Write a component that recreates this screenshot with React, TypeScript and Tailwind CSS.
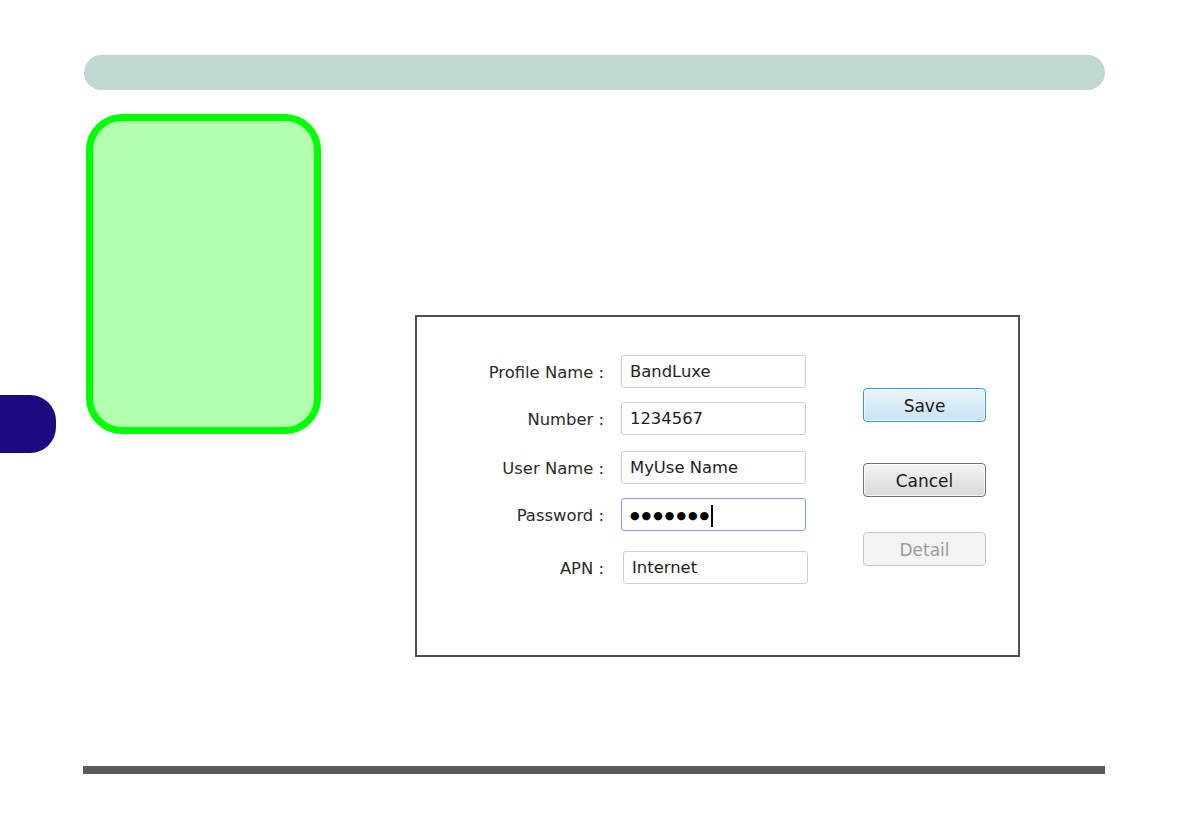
import React from "react";

const font = { fontFamily: '"DejaVu Sans", Verdana, sans-serif' };

function Row({ label, value, mt, shift, focused, password }: { label: string; value?: string; mt: string; shift?: boolean; focused?: boolean; password?: boolean }) {
  return (
    <div className={`flex items-center ${mt}`}>
      <div className="w-[188px] pr-[1px] pt-[4px] text-right text-[16.4px] text-[#2a2a2a] leading-none">{label}</div>
      <div
        className={`${shift ? "ml-[18px]" : "ml-[16px]"} w-[185px] h-[33px] rounded-[3px] bg-white flex items-center pl-[8px] border ${
          focused ? "border-[#7fa9d3]" : "border-[#cfcfcf]"
        }`}
      >
        {password ? (
          <div className="flex items-center pt-[2px]">
            <span className="text-[11px] tracking-[2px] text-black leading-none">●●●●●●●</span>
            <span className="w-[2px] h-[22px] bg-black" />
          </div>
        ) : (
          <span className="text-[16.4px] text-[#1e1e1e] leading-none pt-[2px]">{value}</span>
        )}
      </div>
    </div>
  );
}

export default function App() {
  return (
    <div className="w-[1190px] h-[838px] bg-white overflow-hidden" style={font}>
      <div className="pt-[55px] pl-[84px]">
        <div className="w-[1021px] h-[35px] rounded-full bg-[#c0d7d3]" />
      </div>

      <div className="flex items-start mt-[24px]">
        <div className="w-[56px] h-[58px] mt-[281px] rounded-r-[26px] bg-[#1a0c80]" />
        <div className="ml-[30px] w-[235px] h-[320px] rounded-[36px] border-[7px] border-[#00ff00] bg-[#b3ffb0]" />

        <div className="ml-[94px] mt-[201px] w-[605px] h-[342px] border-2 border-[#4f4f4f] bg-white flex">
          <div className="flex flex-col pt-[38px]">
            <Row label="Profile Name :" value="BandLuxe" mt="mt-0" />
            <Row label="Number :" value="1234567" mt="mt-[14px]" />
            <Row label="User Name :" value="MyUse Name" mt="mt-[16px]" />
            <Row label="Password :" mt="mt-[14px]" focused password />
            <Row label="APN :" value="Internet" mt="mt-[20px]" shift />
          </div>
          <div className="flex flex-col ml-[55px] pt-[71px]">
            <button className="w-[123px] h-[34px] rounded-[4px] border border-[#3a9ad9] bg-gradient-to-b from-[#eaf5fc] to-[#c9e3f4] text-[17px] text-[#1a1a1a] leading-none pt-[2px] shadow-[inset_0_0_0_1px_rgba(255,255,255,0.7)]">
              Save
            </button>
            <button className="mt-[41px] w-[123px] h-[34px] rounded-[4px] border border-[#707070] bg-gradient-to-b from-[#f4f4f4] to-[#d9d9d9] text-[17px] text-[#1a1a1a] leading-none pt-[2px] shadow-[inset_0_0_0_1px_rgba(255,255,255,0.7)]">
              Cancel
            </button>
            <button className="mt-[35px] w-[123px] h-[34px] rounded-[4px] border border-[#c6c6c6] bg-[#f4f4f4] text-[17px] text-[#9c9c9c] leading-none pt-[2px]">
              Detail
            </button>
          </div>
        </div>
      </div>

      <div className="mt-[109px] ml-[83px] w-[1022px] h-[8px] bg-[#595959]" />
    </div>
  );
}
